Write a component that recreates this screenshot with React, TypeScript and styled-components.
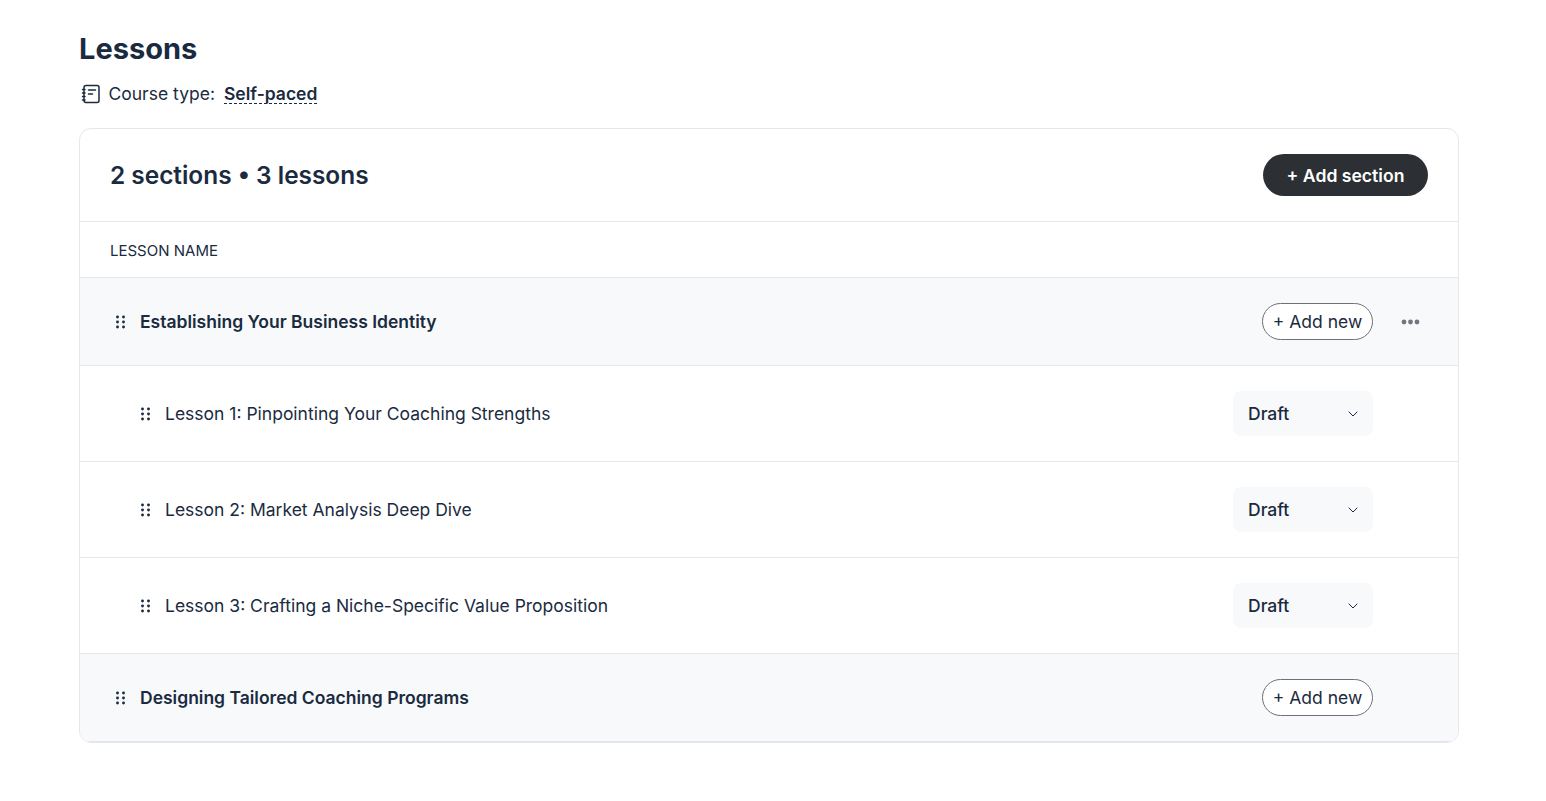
import React from "react";
import styled, { createGlobalStyle } from "styled-components";

const Global = createGlobalStyle`
  html, body { margin: 0; padding: 0; background: #fff; }
  body { font-family: Inter, "Noto Sans", sans-serif; color: #1a2b3f; }
  * { box-sizing: border-box; }
`;

const Page = styled.main`
  width: 1380px;
  margin-left: 79px;
  padding-top: 31px;
`;
const Title = styled.h1`
  margin: 0;
  font-size: 29px;
  line-height: 36px;
  font-weight: 700;
  color: #1a2b3f;
`;
const TypeRow = styled.div`
  display: flex;
  align-items: center;
  height: 24px;
  margin-top: 15px;
  font-size: 17.5px;
  line-height: 24px;
`;
const TypeIcon = styled.svg`
  width: 24px;
  height: 24px;
  margin-right: 5.5px;
`;
const TypeValue = styled.span`
  margin-left: 9px;
  font-weight: 580;
  line-height: 19px;
  height: 20px;
  border-bottom: 1px dashed #1a2b3f;
`;
const Card = styled.section`
  margin-top: 22px;
  border: 1px solid #e6e7ec;
  border-radius: 12px;
  overflow: hidden;
`;
const CardHead = styled.header`
  display: flex;
  align-items: center;
  justify-content: space-between;
  height: 93px;
  padding: 0 30px;
  border-bottom: 1px solid #e6e7ec;
`;
const Count = styled.h2`
  margin: 0;
  font-size: 24.4px;
  font-weight: 560;
  line-height: 32px;
`;
const AddSection = styled.button`
  width: 165px;
  height: 42px;
  border: 0;
  border-radius: 21px;
  background: #2c2f33;
  color: #fff;
  font: 600 17.6px Inter, sans-serif;
`;
const ColumnHead = styled.div`
  display: flex;
  align-items: center;
  height: 56px;
  padding: 1px 0 0 30px;
  font-size: 15px;
  border-bottom: 1px solid #e6e7ec;
`;
const SectionRow = styled.div<{ $last?: boolean }>`
  display: flex;
  align-items: center;
  height: 88px;
  padding-left: 35px;
  background: #f8f9fb;
  border-bottom: 1px solid ${(p) => (p.$last ? "#e3e5ea" : "#e6e7ec")};
`;
const LessonRow = styled.div`
  display: flex;
  align-items: center;
  height: 96px;
  padding-left: 60px;
  border-bottom: 1px solid #e6e7ec;
`;
const Grip = styled.svg`
  width: 12px;
  height: 14px;
  margin-right: 13px;
  flex: none;
`;
const SectionName = styled.span`
  flex: 1;
  font-size: 17.5px;
  font-weight: 600;
`;
const LessonName = styled.span`
  flex: 1;
  font-size: 17.5px;
`;
const AddNew = styled.button`
  width: 111px;
  height: 37px;
  border: 1px solid #6f7178;
  border-radius: 19px;
  background: #fff;
  color: #1a2b3f;
  font: 400 17.5px Inter, sans-serif;
  padding: 0;
`;
const ActionSlot = styled.div`
  width: 85px;
  padding: 1px 0 0 28px;
  display: flex;
  align-items: center;
`;
const Select = styled.div`
  display: flex;
  align-items: center;
  justify-content: space-between;
  width: 140px;
  height: 45px;
  padding: 0 15px;
  border-radius: 8px;
  background: #f8f9fb;
  font-size: 17.5px;
  font-weight: 500;
`;

const GripIcon = () => (
  <Grip viewBox="0 0 12 14" fill="#1a2b3f">
    {[2, 7, 12].flatMap((y) => [2.5, 8.5].map((x) => <circle key={`${x}-${y}`} cx={x} cy={y} r="1.45" />))}
  </Grip>
);
const More = () => (
  <svg width="19" height="6" viewBox="0 0 19 6" fill="#74767d">
    <circle cx="3" cy="3" r="2.4" /><circle cx="9.5" cy="3" r="2.4" /><circle cx="16" cy="3" r="2.4" />
  </svg>
);
const Chevron = () => (
  <svg width="10" height="6" viewBox="0 0 10 6" fill="none" stroke="#1a2b3f" strokeWidth="1" strokeLinecap="round" strokeLinejoin="round">
    <path d="M1 1 5 5l4-4" />
  </svg>
);

const lessons = [
  "Lesson 1: Pinpointing Your Coaching Strengths",
  "Lesson 2: Market Analysis Deep Dive",
  "Lesson 3: Crafting a Niche-Specific Value Proposition",
];

export default function App() {
  return (
    <Page>
      <Global />
      <Title>Lessons</Title>
      <TypeRow>
        <TypeIcon viewBox="0 0 24 24" fill="none" stroke="#1a2b3f" strokeWidth="1.5" strokeLinecap="round" strokeLinejoin="round">
          <path d="M5 5.5A2 2 0 0 1 7 3.5h11a2 2 0 0 1 2 2v13a2 2 0 0 1-2 2H7a2 2 0 0 1-2-2z" />
          <path d="M3.5 7.5H6M3.5 11H6M3.5 14.5H6M3.5 18H6M9.5 8h7M9.5 12h4" />
        </TypeIcon>
        Course type:
        <TypeValue>Self-paced</TypeValue>
      </TypeRow>
      <Card>
        <CardHead>
          <Count>2 sections • 3 lessons</Count>
          <AddSection>+ Add section</AddSection>
        </CardHead>
        <ColumnHead>LESSON NAME</ColumnHead>
        <SectionRow>
          <GripIcon />
          <SectionName>Establishing Your Business Identity</SectionName>
          <AddNew>+ Add new</AddNew>
          <ActionSlot><More /></ActionSlot>
        </SectionRow>
        {lessons.map((l) => (
          <LessonRow key={l}>
            <GripIcon />
            <LessonName>{l}</LessonName>
            <Select>Draft<Chevron /></Select>
            <ActionSlot />
          </LessonRow>
        ))}
        <SectionRow $last>
          <GripIcon />
          <SectionName>Designing Tailored Coaching Programs</SectionName>
          <AddNew>+ Add new</AddNew>
          <ActionSlot />
        </SectionRow>
      </Card>
    </Page>
  );
}
